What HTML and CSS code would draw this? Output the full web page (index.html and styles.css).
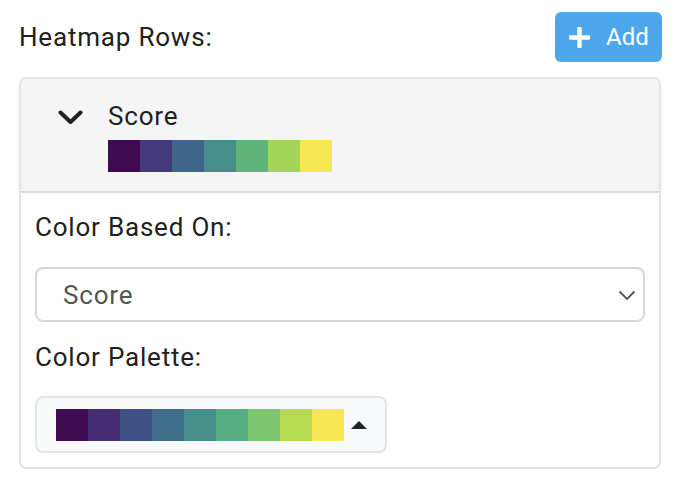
FILE: index.html
```html
<!DOCTYPE html>
<html>
<head>
<meta charset="utf-8">
<link rel="stylesheet" href="styles.css">
</head>
<body>
<div class="page">
  <div class="top">
    <div class="title">Heatmap Rows:</div>
    <button class="add-btn">
      <svg class="plus" width="21" height="21" viewBox="0 0 21 21"><path d="M10.5 1.5V19.5M1.5 10.5H19.5" stroke="#fff" stroke-width="4.4" stroke-linecap="round"/></svg>
      <span>Add</span>
    </button>
  </div>
  <div class="card">
    <div class="card-head">
      <div class="chev-box">
        <svg width="25" height="15" viewBox="0 0 25 15"><path d="M2.5 2.5L12.5 12L22.5 2.5" fill="none" stroke="#222" stroke-width="4" stroke-linecap="round" stroke-linejoin="round"/></svg>
      </div>
      <div class="head-col">
        <div class="head-title">Score</div>
        <div class="swatches">
          <span class="sw" style="background:#3f0a4f"></span>
          <span class="sw" style="background:#44397a"></span>
          <span class="sw" style="background:#3f6689"></span>
          <span class="sw" style="background:#478e8a"></span>
          <span class="sw" style="background:#60b47b"></span>
          <span class="sw" style="background:#a2d55a"></span>
          <span class="sw" style="background:#f7e752"></span>
        </div>
      </div>
    </div>
    <div class="card-body">
      <div class="label">Color Based On:</div>
      <div class="select">
        <span class="select-val">Score</span>
        <svg class="select-chev" width="18" height="11" viewBox="0 0 18 11"><path d="M1.5 1.5L9 9L16.5 1.5" fill="none" stroke="#555" stroke-width="1.8"/></svg>
      </div>
      <div class="label label2">Color Palette:</div>
      <div class="palette">
        <div class="swatches">
          <span class="sw" style="background:#3f0a4f"></span>
          <span class="sw" style="background:#452e74"></span>
          <span class="sw" style="background:#3f5184"></span>
          <span class="sw" style="background:#3f6e8b"></span>
          <span class="sw" style="background:#478e8a"></span>
          <span class="sw" style="background:#57ae84"></span>
          <span class="sw" style="background:#7dc770"></span>
          <span class="sw" style="background:#b6db53"></span>
          <span class="sw" style="background:#f7e752"></span>
        </div>
        <span class="tri"></span>
      </div>
    </div>
  </div>
</div>
</body>
</html>
```
FILE: styles.css
```css
* { box-sizing: border-box; }
html, body { margin: 0; padding: 0; background: #fff; }
body {
  font-family: Roboto, "Liberation Sans", sans-serif;
  font-size: 26px;
  line-height: 28px;
  letter-spacing: 0.8px;
  color: #212121;
}
.page {
  padding: 12px 14px 0 19px;
  width: 676px;
}
.top {
  display: flex;
  align-items: center;
  justify-content: space-between;
  height: 50px;
}
.title { color: #212121; }
.add-btn {
  display: flex;
  align-items: center;
  gap: 16px;
  height: 50px;
  width: 107px;
  padding: 0 0 0 14px;
  border: none;
  border-radius: 6px;
  background: #4da7ec;
  color: #fff;
  font-family: Roboto, "Liberation Sans", sans-serif;
  font-size: 24px;
  line-height: 28px;
  letter-spacing: 0;
}
.plus { display: block; }
.card {
  margin-top: 15px;
  width: 642px;
  border: 2px solid #e3e3e3;
  border-radius: 7px;
  overflow: hidden;
}
.card-head {
  display: flex;
  gap: 25px;
  background: #f5f5f5;
  padding: 23px 0 19px 37px;
  border-bottom: 2px solid #dcdcdc;
}
.chev-box {
  height: 28px;
  display: flex;
  align-items: center;
  padding-top: 3px;
}
.chev-box svg { display: block; }
.head-col {
  display: flex;
  flex-direction: column;
  gap: 10px;
}
.swatches { display: flex; }
.sw {
  display: block;
  width: 32px;
  height: 32px;
}
.card-body {
  padding: 20px 14px 14px 14px;
}
.label { color: #212121; }
.select {
  margin-top: 26px;
  height: 55px;
  border: 2px solid #d7d7d7;
  border-radius: 8px;
  display: flex;
  align-items: center;
  justify-content: space-between;
  padding: 0 7px 0 26px;
}
.select-val { color: #555; }
.select-chev { display: block; margin-top: 1px; }
.label2 { margin-top: 21px; }
.palette {
  margin-top: 25px;
  display: inline-flex;
  align-items: center;
  border: 2px solid #e2e4e7;
  border-radius: 8px;
  background: #f8f9fa;
  padding: 11px 18px 10px 19px;
}
.tri {
  display: block;
  margin-left: 7px;
  width: 0;
  height: 0;
  border-left: 8px solid transparent;
  border-right: 8px solid transparent;
  border-bottom: 8px solid #222;
}
```
